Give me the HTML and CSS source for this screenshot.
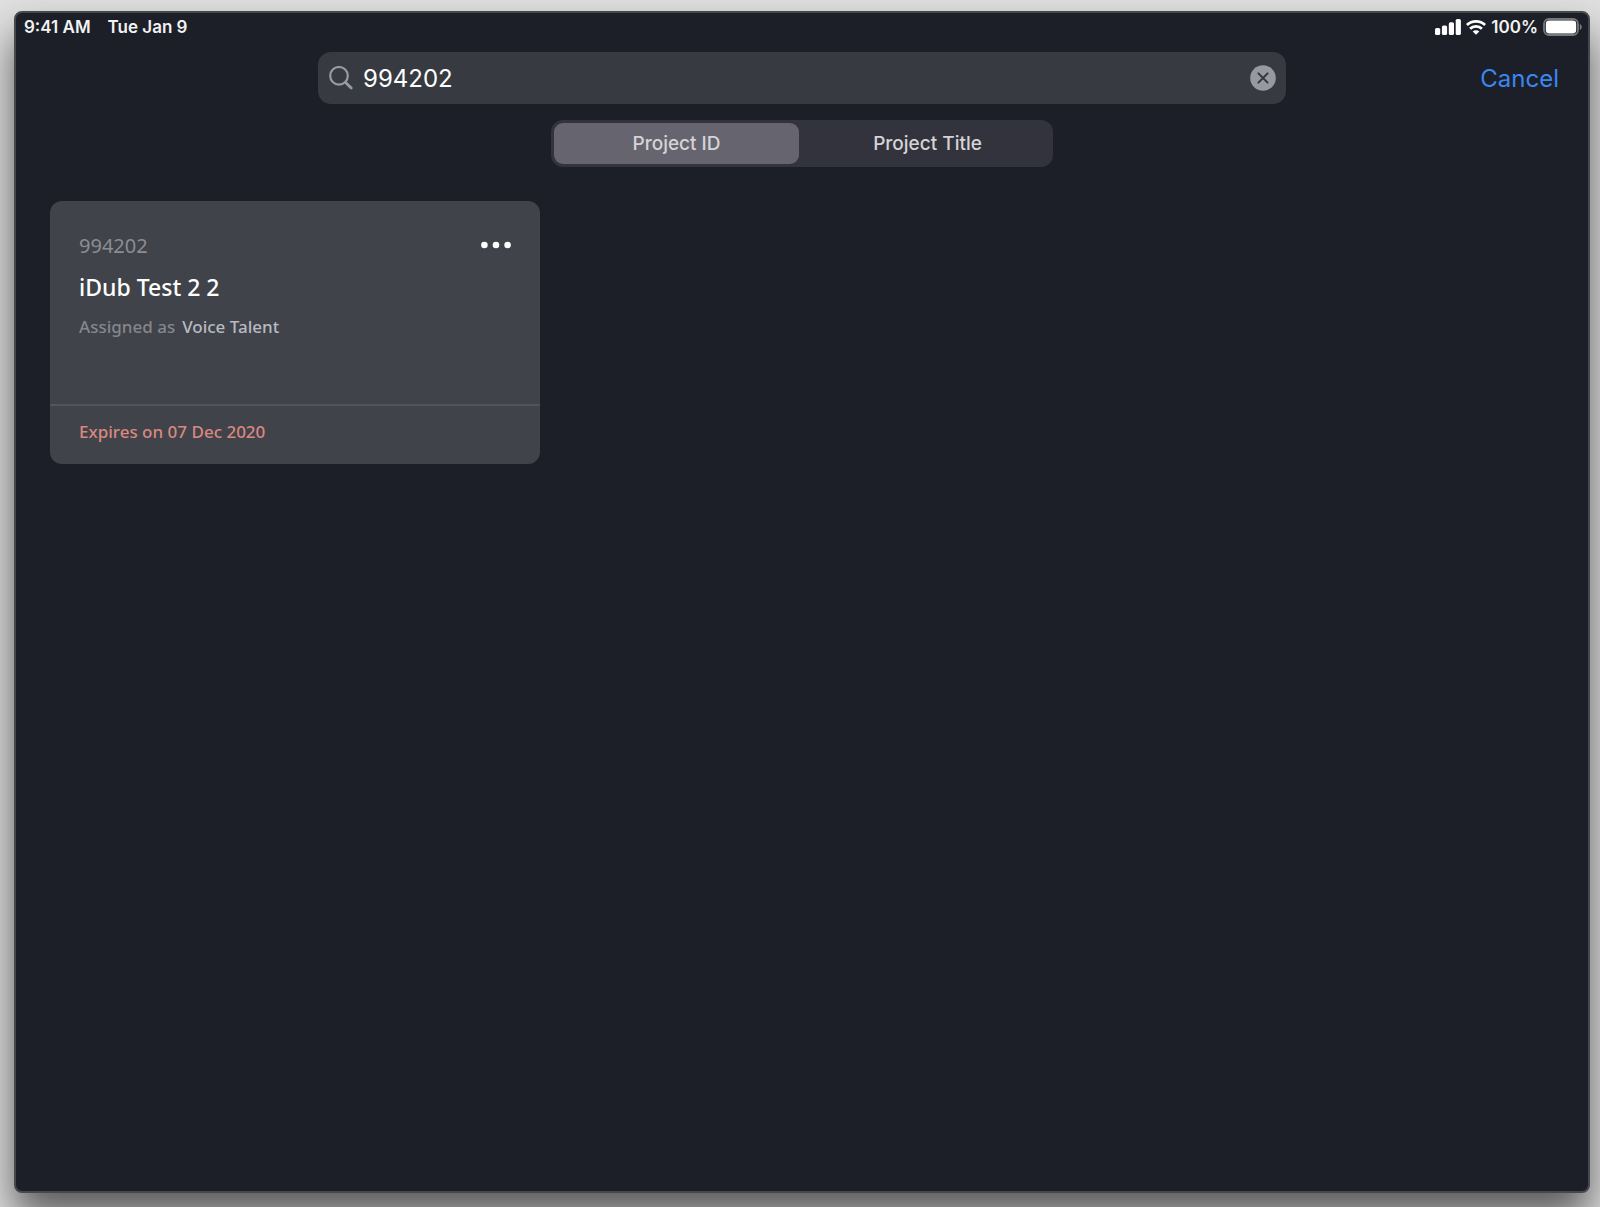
FILE: index.html
```html
<!DOCTYPE html>
<html lang="en">
<head>
    <meta charset="UTF-8">
    <meta name="viewport" content="width=device-width, initial-scale=1.0">
    <title>Project Search</title>
    <link rel="stylesheet" href="styles.css">
</head>
<body>

    <div class="device">
        <div class="status-bar">
            <div class="status-left">
                <span>9:41 AM</span>
                <span>Tue Jan 9</span>
            </div>
            <div class="status-right">
                <svg class="signal" width="26" height="16" viewBox="0 0 26 16" fill="#fff">
                    <rect x="0" y="9" width="5.2" height="7" rx="1.6"/>
                    <rect x="6.9" y="6.5" width="5.2" height="9.5" rx="1.6"/>
                    <rect x="13.8" y="3.3" width="5.2" height="12.7" rx="1.6"/>
                    <rect x="20.7" y="0" width="5.2" height="16" rx="1.6"/>
                </svg>
                <svg class="wifi" width="20" height="16" viewBox="0 0 20 16" fill="none" stroke="#fff" stroke-width="2.8">
                    <path d="M0.9 6 A13 13 0 0 1 19.1 6"/>
                    <path d="M4.1 9.7 A8.4 8.4 0 0 1 15.9 9.7"/>
                    <path d="M10 15.8 L6.7 12.5 A4.7 4.7 0 0 1 13.3 12.5 Z" fill="#fff" stroke="none"/>
                </svg>
                <span class="percent">100%</span>
                <svg class="battery" width="39" height="18" viewBox="0 0 39 18">
                    <rect x="1" y="1" width="34" height="16" rx="5" fill="none" stroke="#77787c" stroke-width="1.8"/>
                    <rect x="2.8" y="2.6" width="30.4" height="12.8" rx="3.4" fill="#fff"/>
                    <path d="M36.8 6 C39.4 7 39.4 11 36.8 12 Z" fill="#77787c"/>
                </svg>
            </div>
        </div>

        <form class="search-row">
            <div class="search-box">
                <svg width="24" height="24" viewBox="0 0 24 24" fill="none" stroke="#9a9aa1" stroke-width="2.2" stroke-linecap="round">
                    <circle cx="10" cy="9.8" r="8.8"/>
                    <path d="M16.6 16.4 L22.2 22" stroke-width="2.8"/>
                </svg>
                <input type="text" value="994202" aria-label="Search projects">
                <button type="button" class="clear" aria-label="Clear search">
                    <svg width="26" height="26" viewBox="0 0 26 26">
                        <circle cx="13" cy="13" r="12.8" fill="#98989f"/>
                        <path d="M8.4 8.4 L17.6 17.6 M17.6 8.4 L8.4 17.6" stroke="#34363d" stroke-width="2" stroke-linecap="round"/>
                    </svg>
                </button>
            </div>
            <button type="button" class="cancel">Cancel</button>
        </form>

        <div class="segments">
            <button type="button" class="segment active" aria-pressed="true">Project ID</button>
            <button type="button" class="segment" aria-pressed="false">Project Title</button>
        </div>

        <main class="projects">
            <article class="card">
                <div class="card-body">
                    <div class="card-top">
                        <span class="project-id">994202</span>
                        <button type="button" class="more" aria-label="More options">
                            <svg width="30" height="8" viewBox="0 0 30 8" fill="#fff">
                                <circle cx="3.4" cy="4" r="3.3"/>
                                <circle cx="15" cy="4" r="3.3"/>
                                <circle cx="26.6" cy="4" r="3.3"/>
                            </svg>
                        </button>
                    </div>
                    <h2>iDub Test 2 2</h2>
                    <p class="role">Assigned as <span>Voice Talent</span></p>
                </div>
                <div class="card-footer">Expires on 07 Dec 2020</div>
            </article>
        </main>
    </div>

</body>
</html>
```

FILE: styles.css
```css
* {
    box-sizing: border-box;
}

body {
    display: flex;
    min-height: 100vh;
    margin: 0;
    padding: 11px 10px 14px 14px;
    background-color: #e0e0e0;
    font-family: Inter, sans-serif;
    color: #ffffff;
    overflow-x: hidden;
}

button {
    padding: 0;
    border: none;
    background: none;
    font-family: inherit;
    cursor: pointer;
}

svg {
    display: block;
}

.device {
    flex: 1;
    min-width: 0;
    border: 2px solid #47484c;
    border-radius: 8px;
    background-color: #1c1f27;
    box-shadow: 0 24px 40px rgba(0, 0, 0, 0.6);
}

.status-bar {
    display: flex;
    justify-content: space-between;
    height: 28px;
    padding: 0 6px 0 8px;
    color: #f2f2f2;
    font-size: 17px;
    font-weight: 600;
    line-height: 28px;
}

.status-left {
    display: flex;
    gap: 17px;
}

.status-right {
    display: flex;
    align-items: center;
    gap: 5px;
}

.search-row {
    display: grid;
    grid-template-columns: 1fr minmax(0, 968px) 1fr;
    align-items: center;
    margin-top: 11px;
}

.search-box {
    grid-column: 2;
    display: flex;
    align-items: center;
    gap: 10px;
    height: 52px;
    padding: 0 10px 0 11px;
    border-radius: 13px;
    background-color: #383a41;
}

.search-box input {
    flex: 1;
    min-width: 0;
    padding: 0;
    border: none;
    outline: none;
    background: none;
    color: #ffffff;
    font-family: inherit;
    font-size: 24px;
}

.cancel {
    justify-self: end;
    margin-right: 29px;
    color: #3a87f0;
    font-size: 24px;
}

.segments {
    display: grid;
    grid-template-columns: 1fr 1fr;
    gap: 6px;
    width: 100%;
    max-width: 502px;
    height: 47px;
    margin: 16px auto 0;
    padding: 3px;
    border-radius: 12px;
    background-color: #33333d;
}

.segment {
    border-radius: 9px;
    color: #d4d4d7;
    font-size: 19px;
    font-weight: 500;
}

.segment.active {
    background-color: #66656f;
}

.projects {
    display: grid;
    grid-template-columns: repeat(auto-fill, minmax(320px, 490px));
    gap: 16px;
    padding: 34px;
    font-family: "Noto Sans", sans-serif;
}

.card {
    border-radius: 12px;
    background-color: #404349;
}

.card-body {
    height: 203px;
    padding: 30px 29px 0;
}

.card-top {
    display: flex;
    align-items: center;
    justify-content: space-between;
    height: 28px;
}

.project-id {
    color: #8b8d92;
    font-size: 20px;
}

.card h2 {
    margin: 10px 0 0;
    font-size: 23px;
    font-weight: 500;
    line-height: 36px;
}

.role {
    display: flex;
    gap: 7px;
    margin: 9px 0 0;
    color: #85878c;
    font-size: 17px;
    font-weight: 500;
    line-height: 26px;
}

.role span {
    color: #b8bac2;
}

.card-footer {
    padding: 12px 29px 18px;
    border-top: 2px solid #51545b;
    color: #d98880;
    font-size: 17px;
    font-weight: 500;
    line-height: 28px;
}
```
